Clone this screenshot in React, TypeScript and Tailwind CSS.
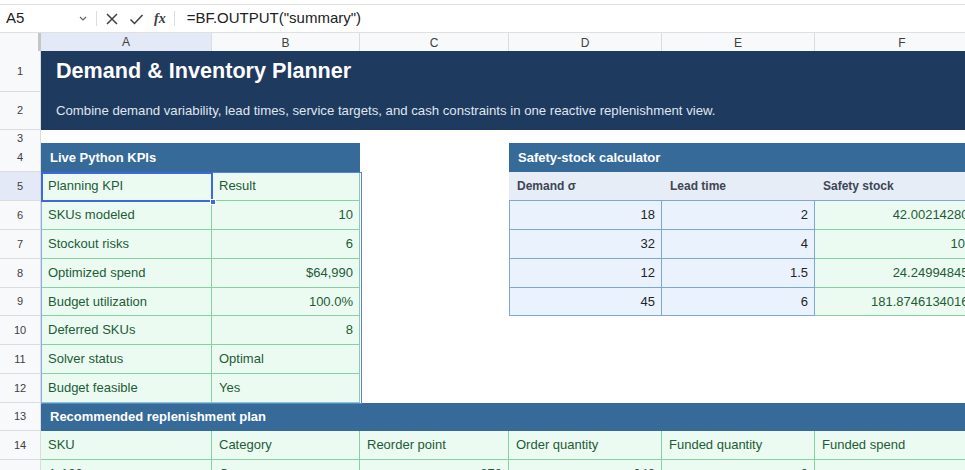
import React from 'react';
import clsx from 'clsx';

const font = { fontFamily: '"Liberation Sans", Arial, sans-serif' };

const GRID = 'grid grid-cols-[41px_171px_148px_149px_153px_153px_175px]';

type Kind = 'green' | 'blue' | 'out' | 'blank';

function RowHead({ n, active }: { n: number; active?: boolean }) {
  return (
    <div
      className={clsx(
        'flex items-center justify-center border-r border-b border-[#dadce0] text-[11px] text-[#3c4043]',
        active ? 'bg-[#e3e9f7]' : 'bg-[#f8f9fa]'
      )}
    >
      {n}
    </div>
  );
}

function Cell({ kind, children, right, first }: { kind: Kind; children?: React.ReactNode; right?: boolean; first?: boolean }) {
  return (
    <div
      className={clsx(
        'flex items-center overflow-hidden whitespace-nowrap text-[13px]',
        right ? 'justify-end pr-[6px]' : 'pl-[7px]',
        kind === 'green' && 'bg-[#ebfbf1] border-r border-b border-[#86d0a4] text-[#1e5b37]',
        kind === 'out' && 'bg-[#ebfbf1] border-r border-b border-[#86d0a4] text-[#1e5b37]',
        kind === 'blue' && 'bg-[#eaf3fd] border-r border-b border-[#7fa7d6] text-[#1f2328]',
        first && kind === 'blue' && 'border-l',
        first && kind === 'out' && 'border-l'
      )}
    >
      {children}
    </div>
  );
}

function SectionHead({ children, span }: { children: React.ReactNode; span: string }) {
  return (
    <div className={clsx(span, 'flex items-center bg-[#366a99] pl-[9px] text-[13px] font-bold text-white whitespace-nowrap overflow-hidden')}>
      {children}
    </div>
  );
}

const kpis: [string, string, boolean][] = [
  ['SKUs modeled', '10', true],
  ['Stockout risks', '6', true],
  ['Optimized spend', '$64,990', true],
  ['Budget utilization', '100.0%', true],
  ['Deferred SKUs', '8', true],
  ['Solver status', 'Optimal', false],
  ['Budget feasible', 'Yes', false],
];

const safety = [
  ['18', '2', '42.0021428024'],
  ['32', '4', '105.6'],
  ['12', '1.5', '24.2499484536'],
  ['45', '6', '181.874613401614'],
];

const heights = ['h-[29px]', 'h-[29px]', 'h-[29px]', 'h-[28px]', 'h-[29px]', 'h-[29px]', 'h-[29px]'];

export default function App() {
  return (
    <div className="w-[965px] h-[470px] overflow-hidden bg-white text-[#202124]" style={font}>
      {/* formula bar */}
      <div className="h-[5px] border-b border-[#e3e3e3]" />
      <div className="flex h-[28px] items-center border-b border-[#e0e0e0]">
        <div className="w-[96px] flex items-center justify-between pl-[6px] pr-[9px] text-[15px]">
          <span>A5</span>
          <svg width="8" height="5" viewBox="0 0 8 5" fill="none" stroke="#5f6368" strokeWidth="1.2">
            <path d="M1 1l3 3 3-3" />
          </svg>
        </div>
        <div className="h-[15px] w-px bg-[#dadce0]" />
        <div className="flex items-center gap-[10px] pl-[8px] pr-[8px]">
          <svg width="14" height="14" viewBox="0 0 14 14" stroke="#3c4043" strokeWidth="1.5" fill="none">
            <path d="M2 2l10 10M12 2L2 12" />
          </svg>
          <svg width="15" height="14" viewBox="0 0 15 14" stroke="#3c4043" strokeWidth="1.5" fill="none">
            <path d="M1.5 7.5l4 4L13.5 3" />
          </svg>
          <span className="text-[14px] italic font-bold text-[#3c4043]" style={{ fontFamily: '"Liberation Serif", serif' }}>
            fx
          </span>
        </div>
        <div className="h-[15px] w-px bg-[#dadce0]" />
        <div className="pl-[12px] text-[15px]">=BF.OUTPUT("summary")</div>
      </div>

      {/* column headers */}
      <div className={clsx(GRID, 'h-[18px] text-[12px] text-[#3c4043]')}>
        <div className="bg-[#f8f9fa] border-r-[3px] border-[#c4c7c5] border-b border-b-[#dadce0]" />
        <div className="flex items-center justify-center bg-[#e3e9f7] border-r border-[#dadce0] border-b-2 border-b-[#4a72e0]">A</div>
        {['B', 'C', 'D', 'E', 'F'].map((c) => (
          <div key={c} className="flex items-center justify-center bg-[#f8f9fa] border-r border-b border-[#dadce0]">
            {c}
          </div>
        ))}
      </div>

      <div className="relative">
        {/* row 1-2 title */}
        <div className={clsx(GRID, 'h-[41px]')}>
          <RowHead n={1} />
          <div className="col-span-6 flex items-center bg-[#1f3a5f] pl-[15px] text-[21.6px] font-bold text-white whitespace-nowrap">
            Demand &amp; Inventory Planner
          </div>
        </div>
        <div className={clsx(GRID, 'h-[38px]')}>
          <RowHead n={2} />
          <div className="col-span-6 flex items-center bg-[#1f3a5f] pl-[15px] text-[13.2px] text-[#dfe6ef] whitespace-nowrap">
            Combine demand variability, lead times, service targets, and cash constraints in one reactive replenishment view.
          </div>
        </div>
        <div className={clsx(GRID, 'h-[13px]')}>
          <RowHead n={3} />
        </div>

        {/* row 4 */}
        <div className={clsx(GRID, 'h-[29px]')}>
          <RowHead n={4} />
          <SectionHead span="col-span-2">Live Python KPIs</SectionHead>
          <div />
          <SectionHead span="col-span-3">Safety-stock calculator</SectionHead>
        </div>

        {/* row 5 */}
        <div className={clsx(GRID, 'h-[29px]')}>
          <RowHead n={5} active />
          <Cell kind="green">Planning KPI</Cell>
          <Cell kind="green">Result</Cell>
          <div />
          {['Demand σ', 'Lead time', 'Safety stock'].map((h) => (
            <div key={h} className="flex items-center bg-[#e6edf6] pl-[8px] text-[12px] font-bold text-[#3d4654] border-b border-[#7fa7d6] whitespace-nowrap">
              {h}
            </div>
          ))}
        </div>

        {/* rows 6-12 */}
        {kpis.map(([label, value, num], i) => (
          <div key={label} className={clsx(GRID, heights[i])}>
            <RowHead n={6 + i} />
            <Cell kind="green">{label}</Cell>
            <Cell kind="green" right={num}>
              {value}
            </Cell>
            <div />
            {safety[i] ? (
              <>
                <Cell kind="blue" right first>
                  {safety[i][0]}
                </Cell>
                <Cell kind="blue" right>
                  {safety[i][1]}
                </Cell>
                <Cell kind="out" right>
                  {safety[i][2]}
                </Cell>
              </>
            ) : null}
          </div>
        ))}

        {/* row 13 */}
        <div className={clsx(GRID, 'h-[28px]')}>
          <RowHead n={13} />
          <SectionHead span="col-span-6">Recommended replenishment plan</SectionHead>
        </div>

        {/* row 14 */}
        <div className={clsx(GRID, 'h-[29px]')}>
          <RowHead n={14} />
          {['SKU', 'Category', 'Reorder point', 'Order quantity', 'Funded quantity', 'Funded spend'].map((h) => (
            <Cell key={h} kind="green">
              {h}
            </Cell>
          ))}
        </div>

        {/* row 15 */}
        <div className={clsx(GRID, 'h-[29px]')}>
          <RowHead n={15} />
          <Cell kind="green">A-100</Cell>
          <Cell kind="green">Core</Cell>
          <Cell kind="green" right>278</Cell>
          <Cell kind="green" right>240</Cell>
          <Cell kind="green" right>0</Cell>
          <Cell kind="green" right>$0</Cell>
        </div>

        {/* referenced range outline A5:B12 */}
        <div className="pointer-events-none absolute left-[41px] top-[121px] h-[232px] w-[321px] border border-[#5a80ea] border-l-[#8eaaf0]" />
        {/* active cell A5 */}
        <div className="pointer-events-none absolute left-[41px] top-[121px] h-[30px] w-[172px] border-2 border-[#3d68e2]" />
        <div className="pointer-events-none absolute left-[210px] top-[148px] h-[6px] w-[6px] bg-[#3d68e2] border border-white" />
      </div>
    </div>
  );
}
